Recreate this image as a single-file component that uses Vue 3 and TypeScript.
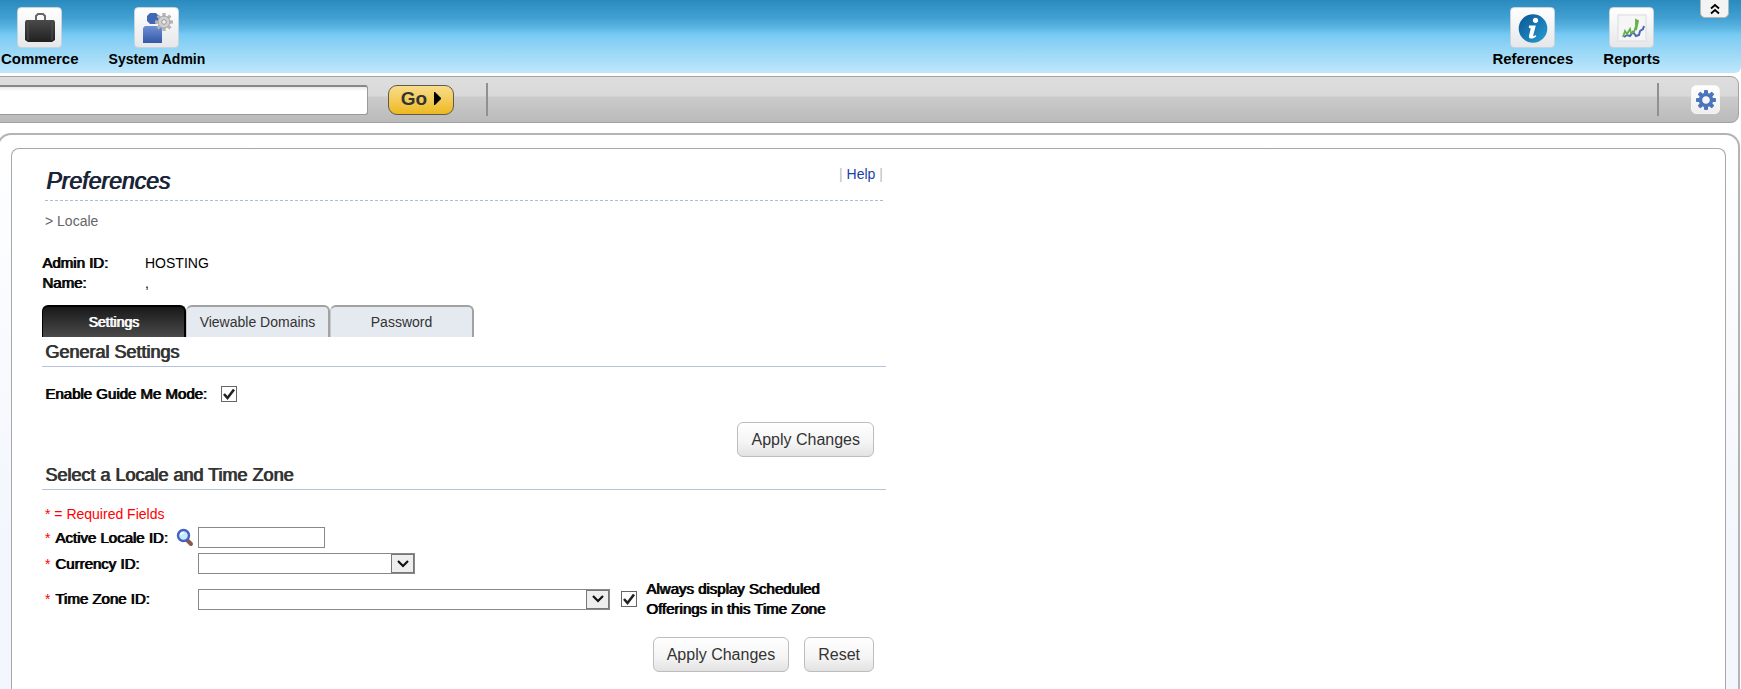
<script setup lang="ts">
import { ref } from 'vue'

const tabs = ['Settings', 'Viewable Domains', 'Password']
const activeTab = ref('Settings')
const search = ref('')
const guideMe = ref(true)
const alwaysDisplay = ref(true)
const locale = ref('')
const currency = ref('')
const timeZone = ref('')
const teeth = [0, 45, 90, 135, 180, 225, 270, 315]

function resetForm() {
  locale.value = ''
  currency.value = ''
  timeZone.value = ''
  alwaysDisplay.value = true
}
</script>

<template>
  <div class="page">
    <header class="banner">
      <nav class="nav" aria-label="Administration">
        <a href="#commerce" class="nav-item commerce">
          <span class="tile">
            <svg width="32" height="32" viewBox="0 0 32 32">
              <defs>
                <linearGradient id="case" x1="0" y1="0" x2="0" y2="1">
                  <stop offset="0" stop-color="#4a4a4a" /><stop offset="1" stop-color="#202020" />
                </linearGradient>
              </defs>
              <path d="M12 9V4l2-2h5l2 2v5" fill="none" stroke="#666" stroke-width="2" />
              <path d="M2 8h28l1 2v18l-3 2H4l-3-2V10z" fill="url(#case)" />
              <path d="M4 10v18M28 10v18" stroke="#505050" stroke-width="1" />
            </svg>
          </span>
          <span>Commerce</span>
        </a>
        <a href="#system-admin" class="nav-item system">
          <span class="tile">
            <svg width="32" height="32" viewBox="0 0 32 32">
              <defs>
                <linearGradient id="person" x1="0" y1="0" x2="0" y2="1">
                  <stop offset="0" stop-color="#6d8fd6" /><stop offset="1" stop-color="#3359a5" />
                </linearGradient>
              </defs>
              <path d="M9 1h6l3 3v5l-3 3H9L6 9V4z" fill="#4168b6" />
              <path d="M4 14h15l2 2v15H2V16z" fill="url(#person)" />
              <g transform="translate(23 10)">
                <rect v-for="a in teeth" :key="a" x="-1.6" y="-9" width="3.2" height="5" fill="#b4b4b4" :transform="`rotate(${a})`" />
                <circle r="6" fill="#cfcfcf" stroke="#a6a6a6" />
                <circle r="2.3" fill="#f1f1f1" stroke="#999" />
              </g>
            </svg>
          </span>
          <span>System Admin</span>
        </a>
      </nav>
      <nav class="nav nav-right" aria-label="Information">
        <a href="#references" class="nav-item references">
          <span class="tile">
            <svg width="32" height="32" viewBox="0 0 32 32">
              <defs>
                <linearGradient id="info" x1="0" y1="0" x2="1" y2="1">
                  <stop offset="0" stop-color="#0b5590" /><stop offset=".5" stop-color="#1878b4" /><stop offset="1" stop-color="#2aa0cf" />
                </linearGradient>
              </defs>
              <circle cx="16" cy="16.500" r="14.300" fill="url(#info)" />
              <circle cx="18.500" cy="8.300" r="2.600" fill="#fff" />
              <path d="M12 13.500h6.800l-2.600 10c-.2 1 .8.600 2.800-.500l.2 1.500c-2.600 2.600-8 3.300-7.200-.8l1.700-7.200-1.900-.8z" fill="#fff" />
            </svg>
          </span>
          <span>References</span>
        </a>
        <a href="#reports" class="nav-item reports">
          <span class="tile">
            <svg width="32" height="32" viewBox="0 0 32 32">
              <rect x="2" y="3" width="28" height="26" fill="#f6f6f6" stroke="#dcdcdc" />
              <path d="M8 25l3-2 3 1 3-4 3 4 3-1 1-4 3-2 1-3" fill="none" stroke="#4a66bd" stroke-width="2" />
              <path d="M7 25l2-6 2 3 3-5 1 4 3-1 2-6V8l2 1-2 9" fill="none" stroke="#62b346" stroke-width="1.800" />
            </svg>
          </span>
          <span>Reports</span>
        </a>
      </nav>
      <button type="button" class="collapse" aria-label="Collapse header">
        <svg width="10" height="12" viewBox="0 0 10 12">
          <path d="M1 5.500L5 2l4 3.500M1 10.500L5 7l4 3.500" fill="none" stroke="#000" stroke-width="1.800" />
        </svg>
      </button>
    </header>

    <form class="toolbar" @submit.prevent>
      <input v-model="search" class="search" type="text" aria-label="Search">
      <button type="submit" class="go">
        Go
        <svg width="7" height="13" viewBox="0 0 7 13"><path d="M0 0h1l6 6v1l-6 6H0z" fill="#000" /></svg>
      </button>
      <span class="divider" />
      <span class="divider divider-end" />
      <button type="button" class="gear" aria-label="Settings menu">
        <svg width="22" height="22" viewBox="-11 -11 22 22">
          <rect v-for="a in teeth" :key="a" x="-2" y="-10" width="4" height="6" rx="1" fill="#4b74bd" :transform="`rotate(${a})`" />
          <circle r="5.500" fill="none" stroke="#4b74bd" stroke-width="3.500" />
        </svg>
      </button>
    </form>

    <div class="frame">
      <main class="panel">
        <div class="content">
          <div class="title-row">
            <h1>Preferences</h1>
            <div class="help"><span>|</span><a href="#help">Help</a><span>|</span></div>
          </div>
          <p class="crumb">&gt; Locale</p>

          <dl class="identity">
            <dt>Admin ID:</dt><dd>HOSTING</dd>
            <dt>Name:</dt><dd>,</dd>
          </dl>

          <div class="tabs" role="tablist">
            <button
              v-for="tab in tabs" :key="tab" type="button" role="tab" class="tab"
              :class="{ active: tab === activeTab }" :aria-selected="tab === activeTab"
              @click="activeTab = tab"
            >{{ tab }}</button>
          </div>

          <form @submit.prevent>
            <h2>General Settings</h2>
            <div class="guide">
              <label for="guide">Enable Guide Me Mode:</label>
              <span class="check">
                <input id="guide" v-model="guideMe" type="checkbox">
                <svg v-if="guideMe" width="16" height="16" viewBox="0 0 16 16"><path d="M3 8l3.500 4L13 3.500" fill="none" stroke="#222" stroke-width="2.600" /></svg>
              </span>
            </div>
            <div class="actions"><button type="submit" class="btn">Apply Changes</button></div>
          </form>

          <form @submit.prevent @reset.prevent="resetForm">
            <h2 class="second">Select a Locale and Time Zone</h2>
            <p class="required">* = Required Fields</p>
            <div class="field locale">
              <span class="name"><i>*</i><label for="locale">Active Locale ID:</label>
                <button type="button" class="lookup" aria-label="Find locale">
                  <svg width="18" height="19" viewBox="0 0 18 19">
                    <path d="M11 12l4 4" stroke="#8a5a4a" stroke-width="4" stroke-linecap="round" />
                    <circle cx="7.500" cy="7.500" r="5.500" fill="#c5ecfb" stroke="#4660c6" stroke-width="2.400" />
                    <path d="M5 7q0-2 2.500-2.500" fill="none" stroke="#fff" stroke-width="1.500" />
                  </svg>
                </button>
              </span>
              <input id="locale" v-model="locale" class="text" type="text">
            </div>
            <div class="field currency">
              <span class="name"><i>*</i><label for="currency">Currency ID:</label></span>
              <span class="pick short">
                <select id="currency" v-model="currency"><option value="" /></select>
                <span class="arrow"><svg width="12" height="8" viewBox="0 0 12 8"><path d="M1 1l5 5 5-5" fill="none" stroke="#111" stroke-width="2.200" /></svg></span>
              </span>
            </div>
            <div class="field zone">
              <span class="name"><i>*</i><label for="zone">Time Zone ID:</label></span>
              <span class="pick long">
                <select id="zone" v-model="timeZone"><option value="" /></select>
                <span class="arrow"><svg width="12" height="8" viewBox="0 0 12 8"><path d="M1 1l5 5 5-5" fill="none" stroke="#111" stroke-width="2.200" /></svg></span>
              </span>
              <span class="check">
                <input id="always" v-model="alwaysDisplay" type="checkbox">
                <svg v-if="alwaysDisplay" width="16" height="16" viewBox="0 0 16 16"><path d="M3 8l3.500 4L13 3.500" fill="none" stroke="#222" stroke-width="2.600" /></svg>
              </span>
              <label for="always">Always display Scheduled<br>Offerings in this Time Zone</label>
            </div>
            <div class="actions last">
              <button type="submit" class="btn">Apply Changes</button>
              <button type="reset" class="btn">Reset</button>
            </div>
          </form>
        </div>
      </main>
    </div>
  </div>
</template>

<style>
body {
  background: #fff;
  overflow-x: hidden;
}
</style>

<style scoped>
* {
  box-sizing: border-box;
  font-family: "Liberation Sans", Arial, sans-serif;
}
.page {
  min-height: 100vh;
  display: flex;
  flex-direction: column;
  font-size: 14px;
  line-height: 20px;
  color: #000;
}
.banner {
  height: 73px;
  display: flex;
  justify-content: space-between;
  position: relative;
  background: linear-gradient(#2a8abe 0, #42a0d2 18px, #62bae6 30px, #74caf4 34px, #8fd3f5 46px, #bfe7fb 73px);
  border-bottom-right-radius: 6px;
}
.nav {
  display: flex;
  padding-top: 7px;
  gap: 30px;
}
.nav-right {
  padding-right: 81px;
}
.nav-item {
  display: flex;
  flex-direction: column;
  align-items: center;
  gap: 2px;
  color: #000;
  font-size: 15px;
  line-height: 18px;
  font-weight: bold;
  text-decoration: none;
  white-space: nowrap;
}
.commerce { padding-left: 1px; }
.system { font-size: 14px; }
.tile {
  width: 45px;
  height: 41px;
  display: grid;
  place-items: center;
  border: 1px solid #c9d3da;
  border-radius: 4px;
  background: linear-gradient(#fff, #e6e7ea);
}
.collapse {
  position: absolute;
  top: -4px;
  right: 12px;
  width: 29px;
  height: 22px;
  padding: 4px 0 0;
  display: grid;
  place-items: center;
  border: 1px solid #b5b5b5;
  border-radius: 5px;
  background: #f3f3f3;
}
.toolbar {
  height: 47px;
  margin: 3px 2px 0 -8px;
  display: flex;
  align-items: center;
  border: 1px solid #a2a2a2;
  border-radius: 8px;
  background: linear-gradient(#dedede, #d9d9d9 19px, #cbcbcb 20px, #bababa);
}
.search {
  width: 375px;
  height: 30px;
  border: 1px solid #999;
  border-top: 2px solid #888;
  border-radius: 3px;
  padding: 2px 12px;
  font-size: 16px;
  background: linear-gradient(#e8e8e8, #fff 4px);
}
.go {
  width: 66px;
  height: 30px;
  margin-left: 20px;
  padding: 0 0 2px;
  display: flex;
  align-items: center;
  justify-content: center;
  gap: 7px;
  border: 1px solid #5f5a4c;
  border-radius: 9px;
  background: linear-gradient(#f8dc8c, #f3cb58 50%, #edb91f);
  color: #333;
  font-size: 19px;
  font-weight: bold;
}
.divider {
  width: 2px;
  height: 33px;
  margin-left: 32px;
  background: #909090;
}
.divider-end { margin-left: auto; }
.gear {
  width: 29px;
  height: 29px;
  margin: 0 18px 0 32px;
  padding: 0;
  display: grid;
  place-items: center;
  border: 1px solid #f4f4f4;
  border-radius: 5px;
  background: linear-gradient(#fff, #eee);
}
.frame {
  flex: 1;
  display: flex;
  margin: 10px 1px 0 -3px;
  padding: 13px 12px 0;
  border: 2px solid #b4b4b4;
  border-bottom: 0;
  border-radius: 14px 14px 0 0;
  background: linear-gradient(#fff, #fcfdff 80px, #f3f6fc 400px);
}
.panel {
  flex: 1;
  padding: 0 30px;
  border: 1px solid #a8a8a8;
  border-bottom: 0;
  border-radius: 8px 8px 0 0;
  background: #fff;
}
.content { max-width: 844px; }
.title-row {
  height: 52px;
  margin: 0 3px;
  display: flex;
  align-items: flex-start;
  justify-content: space-between;
  border-bottom: 1px dashed #a9bbd6;
}
h1 {
  margin: 17px 0 0 1px;
  font-size: 23px;
  line-height: 30px;
  font-weight: normal;
  font-style: italic;
  color: #1a2437;
}
.help {
  margin-top: 15px;
  display: flex;
  gap: 4px;
  color: #bbb;
}
.help a {
  color: #1a3fa5;
  text-decoration: none;
}
.crumb {
  margin: 10px 3px 0;
  color: #666;
}
.identity {
  display: grid;
  grid-template-columns: 103px 1fr;
  margin: 22px 0 0;
}
.identity dd { margin: 0; }
dt, label {
  font-size: 15px;
  line-height: 20px;
}
h1, h2, dt, label, .tab.active { text-shadow: 1px 0 currentColor; }
.tabs {
  display: flex;
  margin-top: 12px;
}
.tab {
  width: 144px;
  height: 32px;
  padding: 0;
  border: 2px solid #a2a2a2;
  border-left: 1px solid #c8c8c8;
  border-bottom: 0;
  border-radius: 6px 6px 0 0;
  background: #e4eaf0;
  color: #333;
  font-size: 14px;
}
.tab.active {
  border-color: #000;
  background: linear-gradient(#191919, #4a4a4a);
  color: #fff;
}
h2 {
  margin: 0;
  padding: 4px 3px;
  height: 30px;
  border-bottom: 1px solid #b5c4dd;
  font-size: 18px;
  line-height: 22px;
  font-weight: normal;
  color: #333;
}
.guide {
  display: flex;
  align-items: center;
  gap: 14px;
  margin: 17px 3px 0;
}
.check {
  display: grid;
  flex: none;
}
.check > * { grid-area: 1 / 1; }
.check svg { pointer-events: none; }
.check input {
  appearance: none;
  width: 16px;
  height: 16px;
  margin: 0;
  border: 1px solid #666;
  background: #fff;
}
.actions {
  display: flex;
  justify-content: flex-end;
  gap: 15px;
  padding-right: 12px;
  margin-top: 18px;
}
.btn {
  height: 35px;
  padding: 0 13px;
  border: 1px solid #bdbdbd;
  border-radius: 6px;
  background: linear-gradient(#fff, #f4f4f4 60%, #e2e2e2);
  color: #333;
  font-size: 16px;
}
.second { margin-top: 3px; }
.required {
  margin: 14px 3px 0;
  color: #f00;
}
.field {
  display: flex;
  align-items: center;
  margin-left: 3px;
}
.field.locale { margin-top: 3px; }
.field.currency { margin-top: 5px; }
.field.zone { margin-top: 5px; }
.zone .check { margin: 0 9px 0 11px; }
.name {
  width: 153px;
  display: flex;
  align-items: center;
}
.name i {
  width: 10px;
  color: #f00;
  font-style: normal;
}
.lookup {
  margin-left: auto;
  margin-right: 4px;
  padding: 0;
  border: 0;
  background: none;
  display: grid;
}
.text {
  width: 127px;
  height: 21px;
  padding: 0 3px;
  border: 1px solid #888;
  background: #fff;
}
.pick {
  display: grid;
  height: 21px;
}
.pick > * { grid-area: 1 / 1; }
.pick select {
  appearance: none;
  width: 100%;
  height: 21px;
  padding: 0 26px 0 4px;
  border: 1px solid #888;
  border-radius: 0;
  background: #fff;
}
.short { width: 217px; }
.long { width: 412px; }
.arrow {
  justify-self: end;
  width: 23px;
  height: 19px;
  margin: 1px;
  display: grid;
  place-items: center;
  border: 1px solid #777;
  background: #eee;
  pointer-events: none;
}
</style>
